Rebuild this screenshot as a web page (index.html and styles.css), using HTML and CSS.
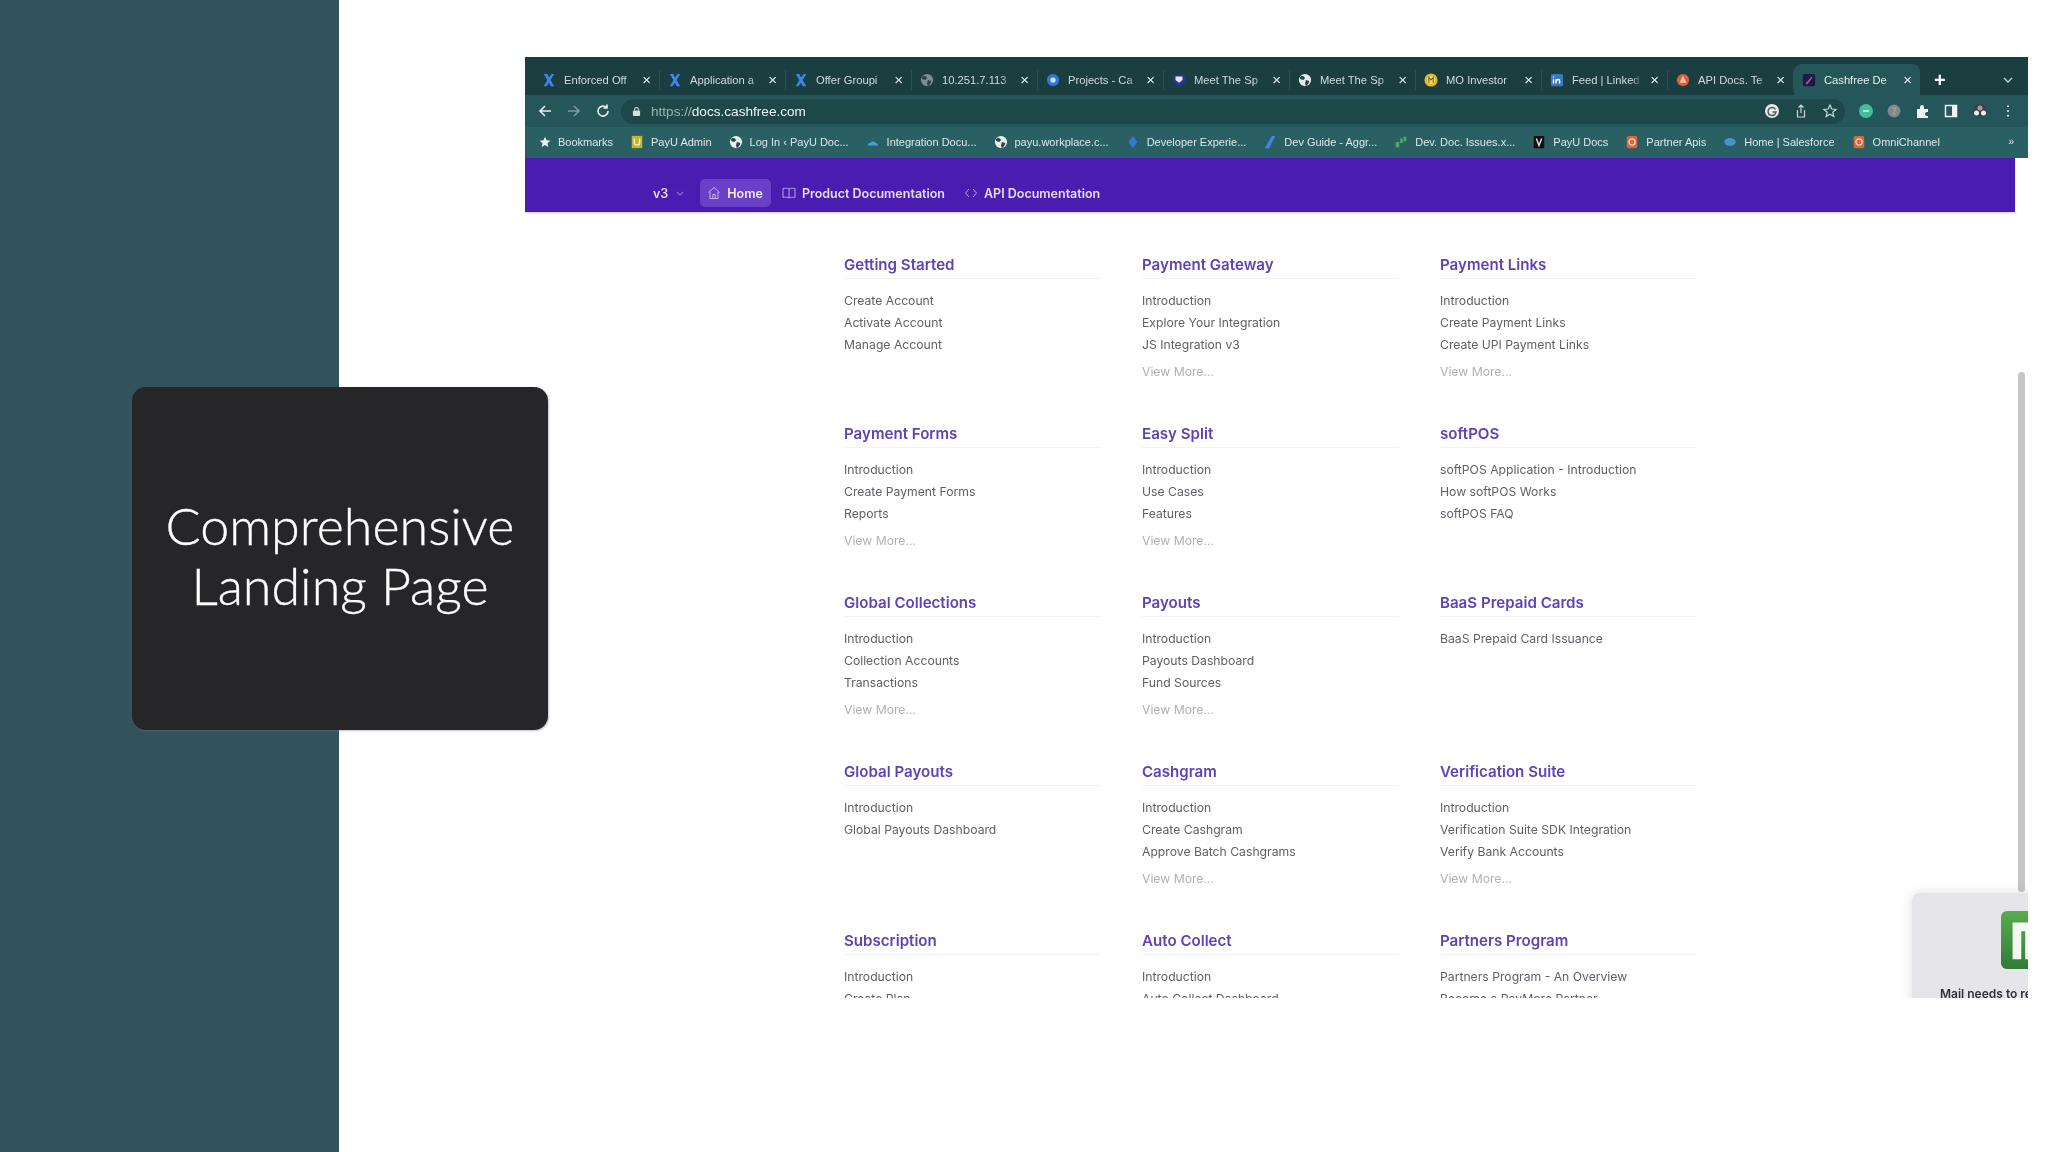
FILE: index.html
```html
<!DOCTYPE html>
<html lang="en">
<head>
<meta charset="utf-8">
<title>Comprehensive Landing Page</title>
<link rel="stylesheet" href="styles.css">
</head>
<body>
<svg class="defs" width="0" height="0" aria-hidden="true">
  <symbol id="fx" viewBox="0 0 16 16"><path d="M2 1h4l2 4 3-4h3L9.800 8l4.200 7h-4L8 11l-3 4H2l4.200-7z" fill="#3f86e8"/></symbol>
  <symbol id="fglobe" viewBox="0 0 16 16"><circle cx="8" cy="8" r="7" fill="#e8eeee"/><path d="M4 3l3 1 1 2-2 2-3-1-1-2zM9 8l4 1-1 3-3 3-1-3z" fill="#24464a"/></symbol>
  <symbol id="fglobeg" viewBox="0 0 16 16"><circle cx="8" cy="8" r="7" fill="#7d8f90"/><path d="M4 3l3 1 1 2-2 2-3-1-1-2zM9 8l4 1-1 3-3 3-1-3z" fill="#2a4649"/></symbol>
  <symbol id="fblue" viewBox="0 0 16 16"><circle cx="8" cy="8" r="7" fill="#2f78d8"/><circle cx="8" cy="8" r="3" fill="#cfe2f7"/></symbol>
  <symbol id="fshield" viewBox="0 0 16 16"><path d="M1 2h14v7c0 3-4 5-7 6-3-1-7-3-7-6z" fill="#27358f"/><path d="M4 4h8v4l-4 3-4-3z" fill="#e4e6f6"/></symbol>
  <symbol id="fmo" viewBox="0 0 16 16"><circle cx="8" cy="8" r="7.500" fill="#e4b92c"/><circle cx="8" cy="8" r="4.500" fill="#f3d96c"/><path d="M5.500 11V5l2.500 3 2.500-3v6" fill="none" stroke="#7a5c08" stroke-width="1.200"/></symbol>
  <symbol id="fin" viewBox="0 0 16 16"><rect x="1" y="1" width="14" height="14" rx="2" fill="#3b78bd"/><path d="M4 7v5M4 4v1M7 12V7m0 2c1-2 4-2 4 0v3" fill="none" stroke="#fff" stroke-width="1.600"/></symbol>
  <symbol id="forange" viewBox="0 0 16 16"><circle cx="8" cy="8" r="7" fill="#d9603a"/><path d="M8 3l4 8H4z" fill="#f4c0a0"/></symbol>
  <symbol id="fcash" viewBox="0 0 16 16"><rect x="1" y="1" width="14" height="14" rx="2" fill="#191a4a"/><path d="M4 12l7-8 1 1-6 8z" fill="#c0508c"/></symbol>
  <symbol id="fu" viewBox="0 0 16 16"><rect x="2" y="1" width="12" height="14" fill="#c6b52c"/><path d="M5 4v5c0 3 6 3 6 0V4" fill="none" stroke="#f3efc0" stroke-width="1.600"/></symbol>
  <symbol id="fcloud" viewBox="0 0 16 16"><path d="M2 12c0-3 2-3 3-3 1-2 5-2 6 0 2 0 3 1 3 3z" fill="#4d9bd6"/></symbol>
  <symbol id="fdiamond" viewBox="0 0 16 16"><path d="M8 1l5 7-5 7-5-7z" fill="#3576d8"/></symbol>
  <symbol id="fslash" viewBox="0 0 16 16"><path d="M10 1h4l-7 14H2z" fill="#3f86e8"/></symbol>
  <symbol id="fsheet" viewBox="0 0 16 16"><path d="M2 8h4v6H2zM7 4h3v5H7zM11 2h3v5h-3z" fill="#4fa866"/></symbol>
  <symbol id="fv" viewBox="0 0 16 16"><rect x="2" y="1" width="12" height="14" rx="1" fill="#111"/><path d="M5 4l3 8 3-8" fill="none" stroke="#e6e6e6" stroke-width="1.600"/></symbol>
  <symbol id="fq" viewBox="0 0 16 16"><rect x="2" y="1" width="12" height="14" rx="2" fill="#d8693f"/><circle cx="8" cy="8" r="3.500" fill="none" stroke="#f6d8c6" stroke-width="1.400"/></symbol>
  <symbol id="fsf" viewBox="0 0 16 16"><ellipse cx="8" cy="8" rx="6.500" ry="4.500" fill="#4a93d0"/></symbol>
  <linearGradient id="mailgreen" x1="0" y1="0" x2="0" y2="1"><stop offset="0" stop-color="#58ad4e"/><stop offset="1" stop-color="#2f7c38"/></linearGradient>
</svg>

<main class="slide">
  <aside class="rail"></aside>
  <h1 class="card">Comprehensive<br>Landing Page</h1>

  <section class="browser">
    <div class="tabs">
      <div class="tab"><svg class="fav"><use href="#fx"/></svg><span class="tab-label">Enforced Off</span><span class="x">×</span></div>
      <div class="tab"><svg class="fav"><use href="#fx"/></svg><span class="tab-label">Application a</span><span class="x">×</span></div>
      <div class="tab"><svg class="fav"><use href="#fx"/></svg><span class="tab-label">Offer Groupi</span><span class="x">×</span></div>
      <div class="tab"><svg class="fav"><use href="#fglobeg"/></svg><span class="tab-label">10.251.7.113</span><span class="x">×</span></div>
      <div class="tab"><svg class="fav"><use href="#fblue"/></svg><span class="tab-label">Projects - Ca</span><span class="x">×</span></div>
      <div class="tab"><svg class="fav"><use href="#fshield"/></svg><span class="tab-label">Meet The Sp</span><span class="x">×</span></div>
      <div class="tab"><svg class="fav"><use href="#fglobe"/></svg><span class="tab-label">Meet The Sp</span><span class="x">×</span></div>
      <div class="tab"><svg class="fav"><use href="#fmo"/></svg><span class="tab-label">MO Investor</span><span class="x">×</span></div>
      <div class="tab"><svg class="fav"><use href="#fin"/></svg><span class="tab-label">Feed | Linked</span><span class="x">×</span></div>
      <div class="tab"><svg class="fav"><use href="#forange"/></svg><span class="tab-label">API Docs. Te</span><span class="x">×</span></div>
      <div class="tab tab-active"><svg class="fav"><use href="#fcash"/></svg><span class="tab-label">Cashfree De</span><span class="x">×</span></div>
      <span class="newtab">+</span>
      <svg class="tabmenu" viewBox="0 0 10 6"><path d="M1 1l4 4 4-4" fill="none" stroke="#c6d6d6" stroke-width="1.300"/></svg>
    </div>

    <div class="toolbar">
      <svg class="tool" viewBox="0 0 16 16"><path d="M14 8H3m5-5L3 8l5 5" fill="none" stroke="#e6eeee" stroke-width="1.600"/></svg>
      <svg class="tool" viewBox="0 0 16 16"><path d="M2 8h11M8 3l5 5-5 5" fill="none" stroke="#7d9a9c" stroke-width="1.600"/></svg>
      <svg class="tool" viewBox="0 0 16 16"><path d="M13 8a5 5 0 1 1-1.500-3.500M12 1.500V5H8.500" fill="none" stroke="#e6eeee" stroke-width="1.600"/></svg>
      <div class="omnibox">
        <svg class="lock" viewBox="0 0 10 12"><rect x="1" y="5" width="8" height="6" rx="1" fill="#d6e2e2"/><path d="M3 5V3.500a2 2 0 0 1 4 0V5" fill="none" stroke="#d6e2e2" stroke-width="1.200"/></svg>
        <span class="url"><span class="url-dim">https://</span>docs.cashfree.com</span>
        <span class="omni-actions">
          <svg class="tool" viewBox="0 0 16 16"><circle cx="8" cy="8" r="7" fill="#e8ecec"/><path d="M11.500 6.500A4 4 0 1 0 12 9H8.500" fill="none" stroke="#4a5a5c" stroke-width="1.500"/></svg>
          <svg class="tool" viewBox="0 0 16 16"><path d="M4.500 7v7h7V7M8 10V2M5.500 4.500L8 2l2.500 2.500" fill="none" stroke="#c8d8d8" stroke-width="1.200"/></svg>
          <svg class="tool" viewBox="0 0 16 16"><path d="M8 2l1.800 4 4.200.4-3.200 2.800 1 4.300L8 11.200 4.200 13.500l1-4.300L2 6.400 6.200 6z" fill="none" stroke="#c8d8d8" stroke-width="1.200"/></svg>
        </span>
      </div>
      <div class="exts">
        <svg class="tool" viewBox="0 0 16 16"><circle cx="8" cy="8" r="7" fill="#3fc09a"/><path d="M5 8h6" stroke="#d6f3ea" stroke-width="1.500"/></svg>
        <svg class="tool" viewBox="0 0 16 16"><circle cx="8" cy="8" r="6.500" fill="#7b8a90"/><path d="M6 5h4l-3 6h3" fill="none" stroke="#c48a9a" stroke-width="1.300"/></svg>
        <svg class="tool" viewBox="0 0 16 16"><path d="M2 6h3V4a2 2 0 0 1 4 0v2h4v3h-1a2 2 0 0 0 0 4h1v2H2z" fill="#eef3f3"/></svg>
        <svg class="tool" viewBox="0 0 16 16"><rect x="2.500" y="2.500" width="11" height="11" fill="none" stroke="#eef3f3" stroke-width="1.500"/><rect x="9" y="3" width="4" height="10" fill="#eef3f3"/></svg>
        <svg class="tool" viewBox="0 0 16 16"><circle cx="8" cy="8" r="7.500" fill="#2f4a4c"/><circle cx="8" cy="5" r="2.500" fill="#c98f8a"/><circle cx="4.500" cy="10" r="2.500" fill="#e8eeee"/><circle cx="11.500" cy="10" r="2.500" fill="#e8eeee"/></svg>
        <svg class="tool" viewBox="0 0 16 16"><path d="M8 2.500v1.500M8 7.200v1.500M8 12v1.500" stroke="#e6eeee" stroke-width="2"/></svg>
      </div>
    </div>

    <div class="bookmarks">
      <span class="bm"><svg class="bm-icon" viewBox="0 0 16 16"><path d="M8 1l2.100 4.700 5 .5-3.800 3.300 1.100 5L8 11.900 3.600 14.500l1.100-5L.9 6.200l5-.5z" fill="#eef3f3"/></svg>Bookmarks</span>
      <span class="bm"><svg class="fav"><use href="#fu"/></svg>PayU Admin</span>
      <span class="bm"><svg class="fav"><use href="#fglobe"/></svg>Log In ‹ PayU Doc...</span>
      <span class="bm"><svg class="fav"><use href="#fcloud"/></svg>Integration Docu...</span>
      <span class="bm"><svg class="fav"><use href="#fglobe"/></svg>payu.workplace.c...</span>
      <span class="bm"><svg class="fav"><use href="#fdiamond"/></svg>Developer Experie...</span>
      <span class="bm"><svg class="fav"><use href="#fslash"/></svg>Dev Guide - Aggr...</span>
      <span class="bm"><svg class="fav"><use href="#fsheet"/></svg>Dev. Doc. Issues.x...</span>
      <span class="bm"><svg class="fav"><use href="#fv"/></svg>PayU Docs</span>
      <span class="bm"><svg class="fav"><use href="#fq"/></svg>Partner Apis</span>
      <span class="bm"><svg class="fav"><use href="#fsf"/></svg>Home | Salesforce</span>
      <span class="bm"><svg class="fav"><use href="#fq"/></svg>OmniChannel</span>
      <span class="bm-more">»</span>
    </div>

    <div class="viewport">
      <nav class="docnav">
        <span class="ver">v3 <svg class="chev" viewBox="0 0 10 6"><path d="M1 1l4 4 4-4" fill="none" stroke="#9a7ed8" stroke-width="1.300"/></svg></span>
        <a class="navlink navlink-on"><svg class="navicon" viewBox="0 0 14 14"><path d="M1.500 6.500L7 1.500l5.500 5M3 6v6.500h8V6M5.800 12.500V8.500h2.400v4" fill="none" stroke="#c9b5ef" stroke-width="1"/></svg>Home</a>
        <a class="navlink"><svg class="navicon" viewBox="0 0 14 14"><path d="M7 3C5.500 2 3 2 1 2.500v9C3 11 5.500 11 7 12c1.500-1 4-1 6-.5v-9C11 2 8.500 2 7 3zm0 0v9" fill="none" stroke="#b9a3ea" stroke-width="1"/></svg>Product Documentation</a>
        <a class="navlink"><svg class="navicon" viewBox="0 0 14 14"><path d="M5 3L1.500 7 5 11M9 3l3.500 4L9 11" fill="none" stroke="#b9a3ea" stroke-width="1"/></svg>API Documentation</a>
      </nav>

      <div class="docs">
        <div class="sec"><h2>Getting Started</h2><ul><li>Create Account</li><li>Activate Account</li><li>Manage Account</li></ul></div>
        <div class="sec"><h2>Payment Gateway</h2><ul><li>Introduction</li><li>Explore Your Integration</li><li>JS Integration v3</li></ul><a class="more">View More...</a></div>
        <div class="sec"><h2>Payment Links</h2><ul><li>Introduction</li><li>Create Payment Links</li><li>Create UPI Payment Links</li></ul><a class="more">View More...</a></div>

        <div class="sec"><h2>Payment Forms</h2><ul><li>Introduction</li><li>Create Payment Forms</li><li>Reports</li></ul><a class="more">View More...</a></div>
        <div class="sec"><h2>Easy Split</h2><ul><li>Introduction</li><li>Use Cases</li><li>Features</li></ul><a class="more">View More...</a></div>
        <div class="sec"><h2>softPOS</h2><ul><li>softPOS Application - Introduction</li><li>How softPOS Works</li><li>softPOS FAQ</li></ul></div>

        <div class="sec"><h2>Global Collections</h2><ul><li>Introduction</li><li>Collection Accounts</li><li>Transactions</li></ul><a class="more">View More...</a></div>
        <div class="sec"><h2>Payouts</h2><ul><li>Introduction</li><li>Payouts Dashboard</li><li>Fund Sources</li></ul><a class="more">View More...</a></div>
        <div class="sec"><h2>BaaS Prepaid Cards</h2><ul><li>BaaS Prepaid Card Issuance</li></ul></div>

        <div class="sec"><h2>Global Payouts</h2><ul><li>Introduction</li><li>Global Payouts Dashboard</li></ul></div>
        <div class="sec"><h2>Cashgram</h2><ul><li>Introduction</li><li>Create Cashgram</li><li>Approve Batch Cashgrams</li></ul><a class="more">View More...</a></div>
        <div class="sec"><h2>Verification Suite</h2><ul><li>Introduction</li><li>Verification Suite SDK Integration</li><li>Verify Bank Accounts</li></ul><a class="more">View More...</a></div>

        <div class="sec"><h2>Subscription</h2><ul><li>Introduction</li><li>Create Plan</li></ul></div>
        <div class="sec"><h2>Auto Collect</h2><ul><li>Introduction</li><li>Auto Collect Dashboard</li></ul></div>
        <div class="sec"><h2>Partners Program</h2><ul><li>Partners Program - An Overview</li><li>Become a PayMore Partner</li></ul></div>
      </div>

      <div class="scrollthumb"></div>
      <div class="notice">
        <svg class="mail" viewBox="0 0 60 60"><rect width="60" height="60" rx="6" fill="url(#mailgreen)"/><path d="M12 50V12h40v38h-9V21h-9v29h-9V21h-4v29z" fill="#f4f8f2"/></svg>
        <span class="notice-text">Mail needs to restart</span>
      </div>
    </div>
  </section>
</main>
</body>
</html>
```

FILE: styles.css
```css
* { box-sizing: border-box; }

html, body {
  margin: 0;
  padding: 0;
  background: #fff;
}

.defs { position: absolute; }

.slide {
  position: relative;
  display: flex;
  width: 2048px;
  height: 1152px;
  overflow: hidden;
  background: #fff;
}

.rail {
  width: 339px;
  flex: none;
  background: #33535c;
}

.card {
  position: absolute;
  left: 132px;
  top: 387px;
  z-index: 2;
  display: flex;
  align-items: center;
  justify-content: center;
  width: 416px;
  height: 343px;
  margin: 0;
  padding-bottom: 8px;
  border-radius: 14px;
  background: #262528;
  box-shadow: 1px 1px 2px rgba(120, 120, 135, .45);
  color: #fff;
  font: 300 52px/60px Lato, "Open Sans", sans-serif;
  -webkit-text-stroke: .35px #fff;
  text-align: center;
}

.browser {
  position: absolute;
  left: 525px;
  top: 57px;
  display: flex;
  flex-direction: column;
  width: 1503px;
  height: 941px;
  overflow: hidden;
  background: #fff;
  font-family: "Liberation Sans", Arial, sans-serif;
  filter: blur(.7px);
}

.tabs {
  display: flex;
  align-items: flex-end;
  flex: none;
  height: 38px;
  padding-left: 9px;
  background: #1b3e41;
}

.tab {
  display: flex;
  align-items: center;
  gap: 8px;
  width: 126px;
  height: 20px;
  margin-bottom: 5px;
  padding: 0 8px;
  border-right: 1px solid #2c5154;
  color: #cfdcdc;
  font-size: 11.200px;
}

.tab-active {
  height: 31px;
  margin-bottom: 0;
  border-right: 0;
  border-radius: 8px 8px 0 0;
  background: #24565a;
  color: #e6efef;
}

.tab-label {
  flex: 1;
  min-width: 0;
  overflow: hidden;
  white-space: nowrap;
  -webkit-mask-image: linear-gradient(90deg, #000 86%, transparent 100%);
  mask-image: linear-gradient(90deg, #000 86%, transparent 100%);
}

.x {
  flex: none;
  color: #e3ecec;
  font-size: 15px;
  line-height: 12px;
}

.fav {
  flex: none;
  width: 14px;
  height: 14px;
}

.newtab {
  margin: 0 0 5px 14px;
  color: #eef4f4;
  font-size: 20px;
  font-weight: 700;
  line-height: 20px;
}

.tabmenu {
  width: 10px;
  height: 6px;
  margin: 0 15px 12px auto;
}

.toolbar {
  display: flex;
  align-items: center;
  flex: none;
  gap: 13px;
  height: 32px;
  padding: 0 12px;
  background: #24565a;
}

.tool {
  flex: none;
  width: 16px;
  height: 16px;
}

.omnibox {
  display: flex;
  align-items: center;
  flex: 1;
  height: 25px;
  margin-left: -3px;
  padding: 0 7px 0 11px;
  border-radius: 13px;
  background: #1e474a;
}

.lock {
  width: 9px;
  height: 11px;
  margin-right: 10px;
}

.url {
  color: #eef4f4;
  font-size: 13.600px;
}

.url-dim { color: #9db4b5; }

.omni-actions {
  display: flex;
  gap: 13px;
  margin-left: auto;
}

.exts {
  display: flex;
  align-items: center;
  gap: 12.500px;
  margin-left: 0;
}

.bookmarks {
  display: flex;
  align-items: center;
  flex: none;
  gap: 17px;
  height: 31px;
  padding: 0 0 2px 14px;
  background: #2a5f63;
  color: #dde8e8;
  font-size: 11px;
  white-space: nowrap;
}

.bm {
  display: flex;
  align-items: center;
  gap: 7px;
}

.bm-icon {
  width: 12px;
  height: 12px;
}

.bm-more {
  margin: 0 14px 0 auto;
  font-size: 10px;
}

.viewport {
  position: relative;
  flex: 1;
  min-height: 0;
  overflow: hidden;
  background: #fff;
}

.docnav {
  display: flex;
  align-items: center;
  width: 1490px;
  height: 54px;
  padding: 16px 0 0 128px;
  background: #4a1cb0;
  box-shadow: 0 1px 2px rgba(120, 90, 190, .35);
  color: #e6dcf8;
  font-family: Inter, "Liberation Sans", sans-serif;
  font-size: 12.500px;
  font-weight: 600;
}

.ver {
  display: flex;
  align-items: center;
  gap: 8px;
  margin-right: 16px;
}

.chev {
  width: 8px;
  height: 5px;
}

.navlink {
  display: flex;
  align-items: center;
  gap: 6px;
  height: 28px;
  margin-right: 4px;
  padding: 0 8px 0 7px;
  border-radius: 5px;
}

.navlink-on {
  margin-right: 4px;
  background: #6a41c6;
  color: #f0eafb;
}

.navicon {
  width: 14px;
  height: 14px;
}

.docs {
  display: grid;
  grid-template-columns: repeat(3, 257px);
  grid-auto-rows: 169px;
  column-gap: 41px;
  padding: 43px 0 0 319px;
}

.sec h2 {
  margin: 0 0 11px;
  padding-bottom: 3px;
  border-bottom: 1px solid #f2f1f6;
  color: #5f42b5;
  font-family: Inter, "Liberation Sans", sans-serif;
  font-size: 15.100px;
  font-weight: 600;
  line-height: 20px;
}

.sec ul {
  margin: 0;
  padding: 0;
  list-style: none;
}

.sec li {
  height: 22px;
  color: #5e6068;
  font-family: Inter, "Liberation Sans", sans-serif;
  font-size: 12.200px;
  line-height: 22px;
}

.more {
  display: block;
  margin-top: 5px;
  color: #b0b1b8;
  font-family: Inter, "Liberation Sans", sans-serif;
  font-size: 12.200px;
  line-height: 22px;
}

.scrollthumb {
  position: absolute;
  left: 1493px;
  top: 214px;
  width: 7px;
  height: 520px;
  border-radius: 4px;
  background: #c6c6ca;
}

.notice {
  position: absolute;
  left: 1387px;
  top: 735px;
  width: 160px;
  height: 130px;
  padding: 18px 0 0 28px;
  border-radius: 8px;
  background: #e6e6ea;
  box-shadow: 0 0 12px rgba(80, 80, 90, .18);
}

.mail {
  display: block;
  width: 58px;
  height: 58px;
  margin-left: 61px;
}

.notice-text {
  display: block;
  margin-top: 17px;
  color: #303036;
  font-family: Inter, "Liberation Sans", sans-serif;
  font-size: 12px;
  font-weight: 600;
  white-space: nowrap;
}
```
